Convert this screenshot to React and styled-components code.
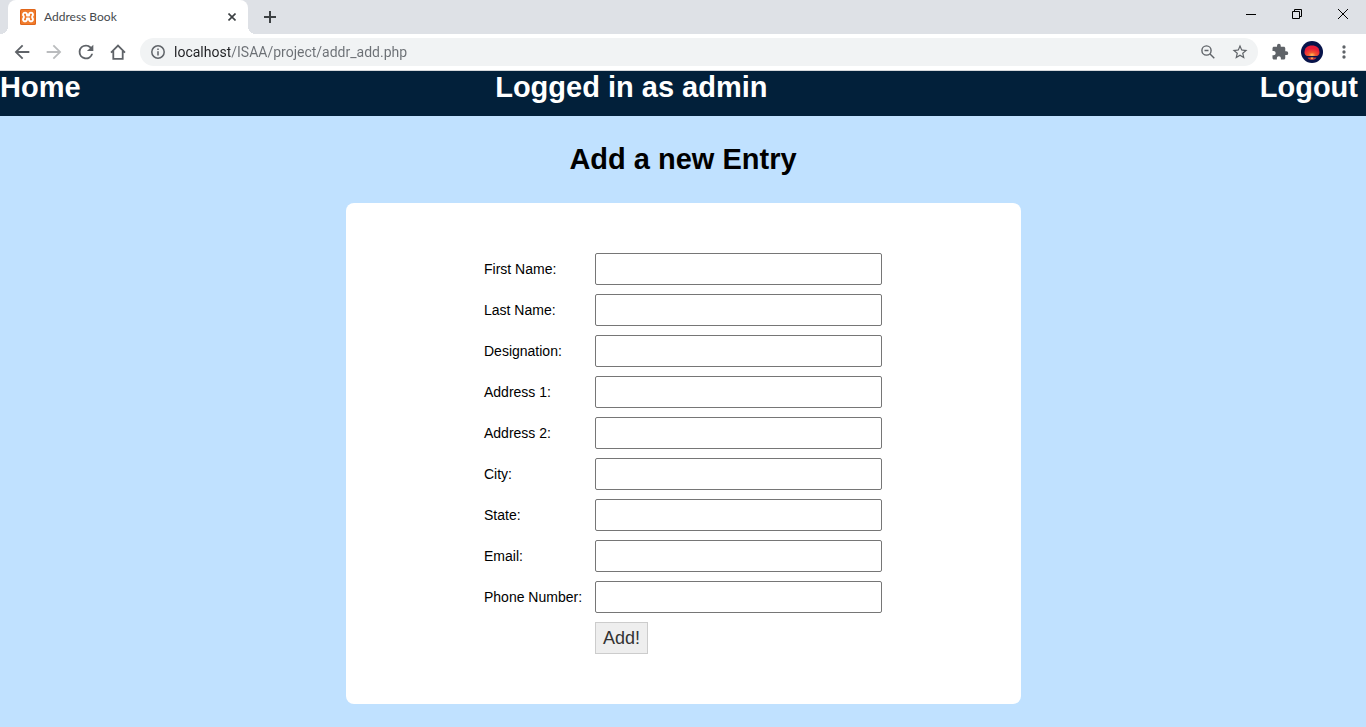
import React from "react";
import styled, { createGlobalStyle } from "styled-components";

const GlobalStyle = createGlobalStyle`
  *, *::before, *::after { box-sizing: border-box; }
  body {
    margin: 0;
    background: #c0e1ff;
    font-family: "Liberation Sans", Arial, sans-serif;
    font-size: 14px;
    color: #000;
  }
`;

const TabStrip = styled.div`
  display: flex;
  justify-content: space-between;
  height: 34px;
  padding-left: 8px;
  background: #dee1e6;
`;

const TabGroup = styled.div`
  display: flex;
`;

const Tab = styled.div`
  position: relative;
  display: flex;
  align-items: center;
  gap: 8px;
  width: 240px;
  padding: 0 8px 0 12px;
  background: #fff;
  border-radius: 8px 8px 0 0;

  &::before,
  &::after {
    content: "";
    position: absolute;
    bottom: 0;
    width: 8px;
    height: 8px;
  }
  &::before {
    right: 100%;
    background: radial-gradient(circle at 0 0, transparent 8px, #fff 8px);
  }
  &::after {
    left: 100%;
    background: radial-gradient(circle at 100% 0, transparent 8px, #fff 8px);
  }
`;

const TabTitle = styled.span`
  flex: 1;
  font: 12px/16px Lato, "Segoe UI", sans-serif;
  color: #45494d;
`;

const IconButton = styled.button`
  display: flex;
  align-items: center;
  justify-content: center;
  width: ${(p) => p.$width || 32}px;
  height: ${(p) => p.$height || 32}px;
  padding: 0;
  border: 0;
  background: none;
  color: ${(p) => p.$color || "#5f6368"};

  svg { display: block; flex: none; }
`;

const NewTab = styled(IconButton)`
  margin-left: 6px;
`;

const WindowControls = styled.div`
  display: flex;
`;

const Toolbar = styled.div`
  display: flex;
  align-items: center;
  height: 37px;
  padding: 0 6px;
  background: #fff;
  border-bottom: 1px solid #d5d7da;
`;

const AddressBar = styled.div`
  flex: 1;
  display: flex;
  align-items: center;
  height: 28px;
  margin: 0 6px;
  padding: 0 2px;
  border-radius: 14px;
  background: #f1f3f4;
`;

const UrlInput = styled.input`
  flex: 1;
  min-width: 0;
  padding: 0;
  border: 0;
  outline: 0;
  font: 14px/20px Roboto, "Segoe UI", sans-serif;
  color: transparent;
  background: linear-gradient(to right, #202124 56px, #6b6f74 56px);
  -webkit-background-clip: text;
  background-clip: text;
`;

const NavBar = styled.nav`
  display: grid;
  grid-template-columns: 29fr 51fr;
  height: 45px;
  background: #02203a;
  color: #fff;
  font-size: 29px;
  font-weight: bold;
  line-height: 33px;
`;

const NavRest = styled.div`
  display: flex;
  justify-content: space-between;
  padding-right: 8px;
`;

const NavLink = styled.a`
  color: inherit;
  text-decoration: none;
`;

const Main = styled.main`
  display: flex;
  flex-direction: column;
  align-items: center;
  padding: 27px 0 23px;
`;

const Title = styled.h1`
  margin: 0 0 27px;
  font-size: 29px;
  line-height: 33px;
`;

const Card = styled.form`
  display: flex;
  justify-content: center;
  width: 100%;
  max-width: 675px;
  padding: 50px 0;
  border-radius: 8px;
  background: #fff;
`;

const Fields = styled.div`
  display: grid;
  gap: 9px;
`;

const Row = styled.div`
  display: grid;
  grid-template-columns: 100px 287px;
  column-gap: 11px;
  align-items: center;
`;

const Label = styled.label`
  white-space: nowrap;
`;

const TextInput = styled.input`
  height: 32px;
  padding: 4px 6px;
  border: 1px solid #767676;
  border-radius: 2px;
  background: #fff;
  font: 18px "Liberation Sans", Arial, sans-serif;
`;

const AddButton = styled.button`
  grid-column: 2;
  justify-self: start;
  height: 32px;
  padding: 0 7px;
  border: 1px solid #ccc;
  background: #eee;
  color: #333;
  font: 18px "Liberation Sans", Arial, sans-serif;
`;

const Icon = ({ size = 22, path }) => (
  <svg width={size} height={size} viewBox="0 0 24 24" fill="currentColor" aria-hidden="true">
    <path d={path} />
  </svg>
);

const paths = {
  back: "M20 11H7.830l5.590-5.590L12 4l-8 8 8 8 1.410-1.410L7.830 13H20v-2z",
  forward: "M12 4l-1.410 1.410L16.170 11H4v2h12.170l-5.580 5.590L12 20l8-8z",
  reload:
    "M17.650 6.350A7.960 7.960 0 0 0 12 4a8 8 0 1 0 7.730 10h-2.080A6 6 0 1 1 12 6c1.660 0 3.140.690 4.220 1.780L13 11h7V4l-2.350 2.350z",
  star:
    "M22 9.240l-7.190-.620L12 2 9.190 8.630 2 9.240l5.460 4.730L5.820 21 12 17.270 18.180 21l-1.630-7.030L22 9.240zM12 15.400l-3.760 2.270 1-4.280-3.320-2.880 4.380-.380L12 6.100l1.710 4.040 4.380.380-3.320 2.880 1 4.280L12 15.400z",
  puzzle:
    "M20.500 11H19V7c0-1.100-.900-2-2-2h-4V3.500a2.500 2.500 0 0 0-5 0V5H4c-1.100 0-1.990.900-1.990 2v3.800H3.500c1.490 0 2.700 1.210 2.700 2.700s-1.210 2.700-2.700 2.700H2V20c0 1.100.900 2 2 2h3.800v-1.500c0-1.490 1.210-2.700 2.700-2.700s2.700 1.210 2.700 2.700V22H17c1.100 0 2-.900 2-2v-4h1.500a2.500 2.500 0 0 0 0-5z",
  more:
    "M12 8a2 2 0 1 0 0-4 2 2 0 0 0 0 4zm0 2a2 2 0 1 0 0 4 2 2 0 0 0 0-4zm0 6a2 2 0 1 0 0 4 2 2 0 0 0 0-4z",
};

const Favicon = () => (
  <svg width="16" height="16" viewBox="0 0 16 16" aria-hidden="true">
    <rect width="16" height="16" rx="1.500" fill="#e0661a" />
    <rect x="1" y="1" width="14" height="14" rx="1" fill="#f07b2c" />
    <path
      d="M5 3.600a2 2 0 0 0-1.200 3.600v1.600A2 2 0 1 0 7 10.600V9.500h2v1.100a2 2 0 1 0 3.200-1.800V7.200A2 2 0 1 0 9 5.400v1.100H7V5.400A2 2 0 0 0 5 3.600z"
      fill="none"
      stroke="#fff"
      strokeWidth="1.900"
      strokeLinejoin="round"
    />
  </svg>
);

const Avatar = () => (
  <svg width="22" height="22" viewBox="0 0 22 22" aria-hidden="true">
    <defs>
      <radialGradient id="glow" cx="0.5" cy="0.9" r="0.6">
        <stop offset="0" stopColor="#ffc25a" />
        <stop offset="0.4" stopColor="#f4552f" />
        <stop offset="1" stopColor="#ea1d38" />
      </radialGradient>
    </defs>
    <circle cx="11" cy="11" r="11" fill="#07134a" />
    <path d="M3.500 11.500C3.500 7 6.500 4.500 11 4.500s7.500 2.500 7.500 7c0 2-1.500 3.500-3 3.500h-9c-1.500 0-3-1.500-3-3.500z" fill="url(#glow)" />
    <path d="M6.500 16.500h9c-.500 1.500-2.500 2.500-4.500 2.500s-4-1-4.500-2.500z" fill="#c8383a" />
    <path d="M9.500 16.500h3l-1 1.500h-1z" fill="#ffb357" />
  </svg>
);

const fields = [
  ["firstName", "First Name:"],
  ["lastName", "Last Name:"],
  ["designation", "Designation:"],
  ["address1", "Address 1:"],
  ["address2", "Address 2:"],
  ["city", "City:"],
  ["state", "State:"],
  ["email", "Email:"],
  ["phone", "Phone Number:"],
];

export default function App() {
  return (
    <>
      <GlobalStyle />
      <header>
        <TabStrip>
          <TabGroup>
            <Tab>
              <Favicon />
              <TabTitle>Address Book</TabTitle>
              <IconButton $width={16} $height={16} $color="#3c4043" aria-label="Close tab">
                <svg width="8" height="8" viewBox="0 0 8 8" stroke="currentColor" strokeWidth="1.600">
                  <path d="M0.500 0.500l7 7M7.500 0.500l-7 7" />
                </svg>
              </IconButton>
            </Tab>
            <NewTab $height={34} $color="#3c4043" aria-label="New tab">
              <svg width="12" height="12" viewBox="0 0 12 12" stroke="currentColor" strokeWidth="2">
                <path d="M6 0v12M0 6h12" />
              </svg>
            </NewTab>
          </TabGroup>
          <WindowControls>
            <IconButton $width={46} $height={28} $color="#000" aria-label="Minimize">
              <svg width="10" height="10" viewBox="0 0 10 10" fill="currentColor">
                <path d="M0 5h10v1H0z" />
              </svg>
            </IconButton>
            <IconButton $width={46} $height={28} $color="#000" aria-label="Restore">
              <svg width="10" height="10" viewBox="0 0 10 10" fill="none" stroke="currentColor">
                <path d="M0.500 2.500h7v7h-7zM2.500 2.500v-2h7v7h-2" />
              </svg>
            </IconButton>
            <IconButton $width={46} $height={28} $color="#000" aria-label="Close">
              <svg width="10" height="10" viewBox="0 0 10 10" stroke="currentColor">
                <path d="M0 0l10 10M10 0L0 10" />
              </svg>
            </IconButton>
          </WindowControls>
        </TabStrip>
        <Toolbar>
          <IconButton aria-label="Back"><Icon path={paths.back} /></IconButton>
          <IconButton $color="#babcbe" aria-label="Forward"><Icon path={paths.forward} /></IconButton>
          <IconButton aria-label="Reload"><Icon path={paths.reload} /></IconButton>
          <IconButton aria-label="Home page">
            <svg width="16" height="16" viewBox="0 0 16 16" fill="none" stroke="currentColor" strokeWidth="1.800">
              <path d="M1 8.600L8 1.600l7 7M3.300 7v7.900h9.400V7" />
            </svg>
          </IconButton>
          <AddressBar>
            <IconButton aria-label="Site information">
              <svg width="14" height="14" viewBox="0 0 14 14" fill="none" stroke="currentColor" strokeWidth="1.500">
                <circle cx="7" cy="7" r="6.200" />
                <path d="M7 6.200v4.300M7 3.500v1.600" />
              </svg>
            </IconButton>
            <UrlInput aria-label="Address" defaultValue="localhost/ISAA/project/addr_add.php" spellCheck={false} />
            <IconButton aria-label="Zoom">
              <svg width="14" height="14" viewBox="0 0 14 14" fill="none" stroke="currentColor" strokeWidth="1.400">
                <circle cx="5.500" cy="5.500" r="4.600" />
                <path d="M9 9l4.300 4.300M3.500 5.500h4" />
              </svg>
            </IconButton>
            <IconButton aria-label="Bookmark"><Icon size={18} path={paths.star} /></IconButton>
          </AddressBar>
          <IconButton aria-label="Extensions"><Icon size={18} path={paths.puzzle} /></IconButton>
          <IconButton aria-label="Profile"><Avatar /></IconButton>
          <IconButton aria-label="Menu"><Icon size={20} path={paths.more} /></IconButton>
        </Toolbar>
      </header>
      <NavBar>
        <NavLink href="#home">Home</NavLink>
        <NavRest>
          <span>Logged in as admin</span>
          <NavLink href="#logout">Logout</NavLink>
        </NavRest>
      </NavBar>
      <Main>
        <Title>Add a new Entry</Title>
        <Card onSubmit={(e) => e.preventDefault()}>
          <Fields>
            {fields.map(([name, label]) => (
              <Row key={name}>
                <Label htmlFor={name}>{label}</Label>
                <TextInput id={name} name={name} type="text" />
              </Row>
            ))}
            <Row>
              <AddButton type="submit">Add!</AddButton>
            </Row>
          </Fields>
        </Card>
      </Main>
    </>
  );
}
